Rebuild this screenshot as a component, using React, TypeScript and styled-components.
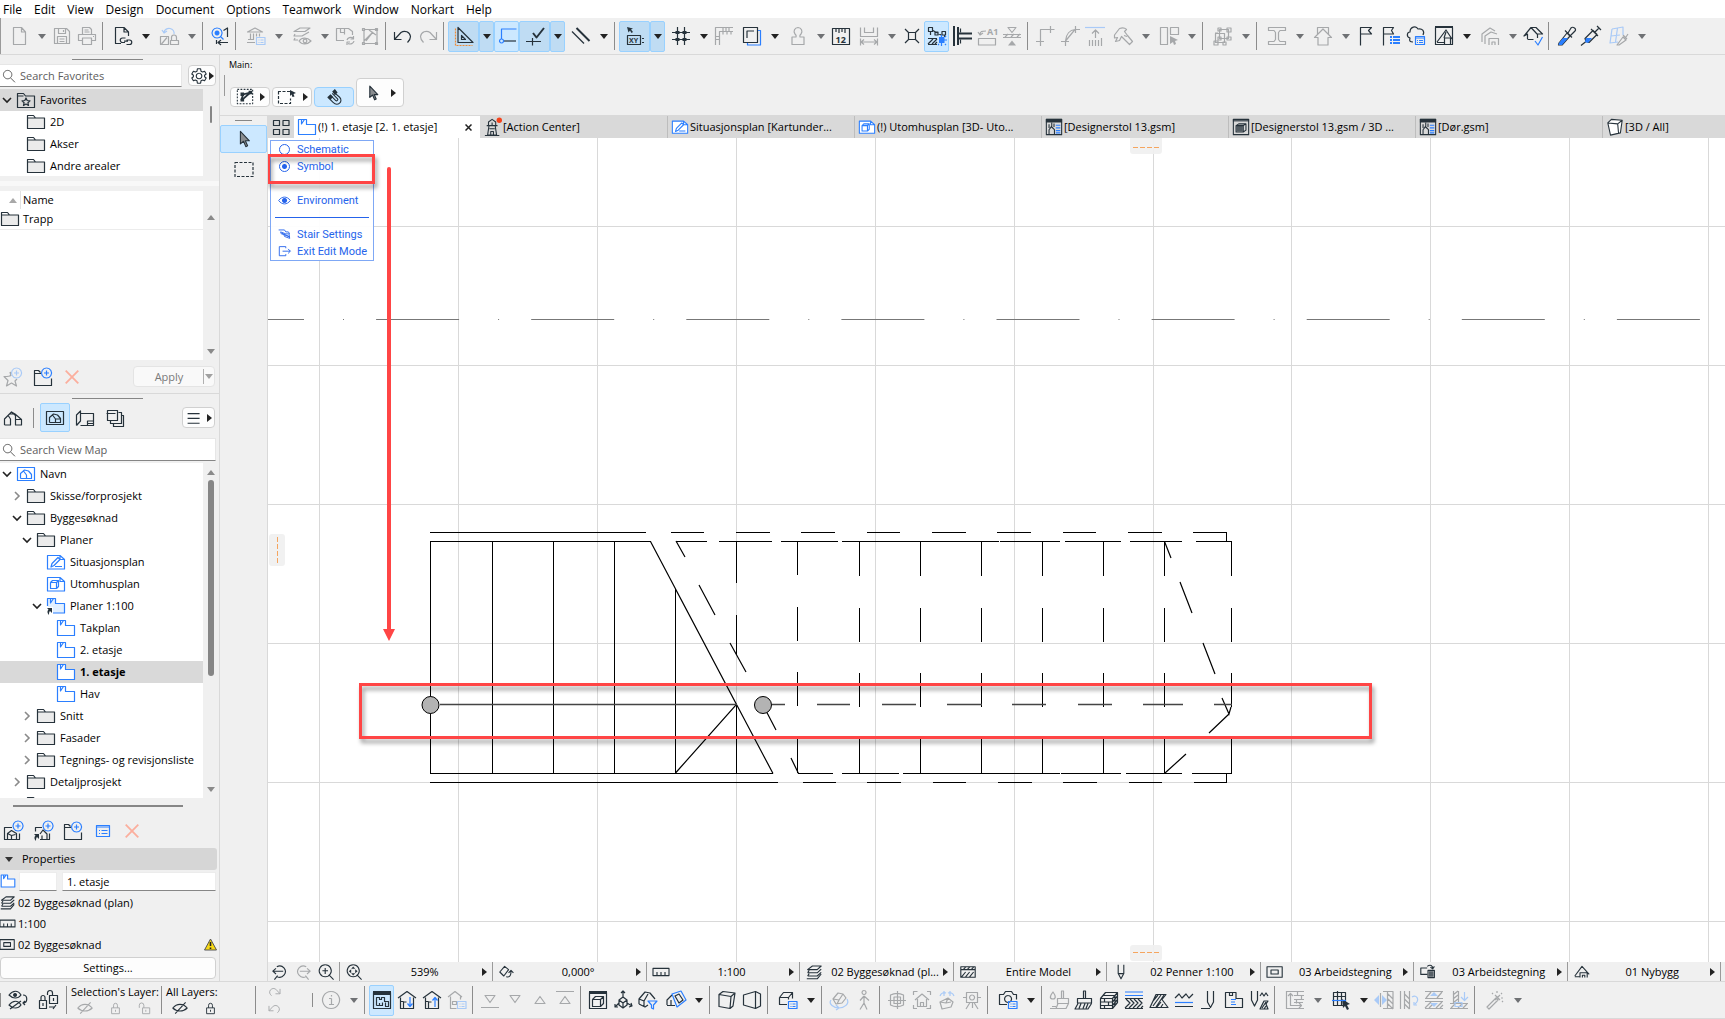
import React from "react";
import styled, { createGlobalStyle, css } from "styled-components";

const INK = "#26323b";
const BLUE = "#2b7fff";
const MENU_BLUE = "#2563eb";
const GREY = "#a6a8aa";
const PALE = "#a9caf7";
const PANEL = "#f0f0f0";
const LINE = "#d9d9d9";
const RED = "#ff4545";

const Global = createGlobalStyle`
  *, *::before, *::after { box-sizing: border-box; }
  html, body { margin: 0; padding: 0; overflow: hidden; }
  body, button, input {
    font-family: "Open Sans", "Noto Sans", sans-serif;
    font-size: 11px;
    line-height: 16px;
    color: #000;
  }
  button { padding: 0; margin: 0; border: 0; background: none; white-space: nowrap; }
  ul { list-style: none; margin: 0; padding: 0; }
`;

/* ---------- icons ---------- */

type Art = { d?: string; f?: string; a?: string; af?: string; o?: string; w?: string; b?: string; t?: [string, number, number, number][] };

const LIST_BADGE = "M10.5 11.5h8.500v7h-8.500z M12.500 14h1 M14.500 14h3 M12.500 16.500h1 M14.500 16.500h3";

const ART: Record<string, Art> = {
  page: { d: "M4.500 1.500h8l4 4.500v12.500h-12z M12.500 1.500v4.500h4" },
  save: { d: "M2.500 2.500h12l3 3v12h-15z M6.500 2.500v5h7v-5 M11.500 4v2 M5.500 17.500v-7h9v7 M7.500 13h5 M7.500 15.500h5" },
  print: { d: "M5.500 8V1.500h7l2 2v4.500 M5 14.500H1.500V8.500h17v6H15 M5.500 12h9v6.500h-9z M7.500 4h4 M7.500 6h5 M16 10.500h1" },
  docLink: { d: "M8 17.500H2.500v-16h8.500l4.500 4.500v4 M11 1.500v4.500h4.500 M12 16.500H9.500a2 2 0 0 1 0-4.500h3 M13.500 18.500h3a2 2 0 0 0 0-4.500h-3 M11 15.200h4" },
  rotatePage: { a: "M5 6a5 4.500 0 0 1 10 2 M3 4l2 3 3-2", d: "M1.500 10.500h8v8h-8z M8 11.500l-5.500 6.500 M11.500 14.500h8v4h-8z M12.500 14v-2.500a2.500 2.500 0 0 1 5 0V14" },
  find: { a: "M7 2a5 5 0 1 0 .1 0 M10.500 10.500l3 3", af: "M7 4.500a2.500 2.500 0 1 0 .1 0", d: "M13.500 4.500l4-2.500v9 M6.500 14v4 M18 16.500H8 M11 14l-3 2.500 3 2.500" },
  bank: { d: "M1.500 6L9 2l7.500 4z M4.500 7.500v6 M7.500 7.500v6 M10.500 7.500v3 M13.500 7.500v3 M2 13.500h6 M1 16.500h8", a: LIST_BADGE },
  layersEye: { d: "M2 5.500l6-3.500h10l-5 3.500z M3 8l-1 2h8l7-4 M3 12l-1 2h4 M7 15c3-4 8-4 12 0c-4 4-9 4-12 0z M13 13.200a1.800 1.800 0 1 0 .1 0" },
  refreshPage: { d: "M9 14.500H1.500v-12h12l4 3V9 M5.500 2.500v4h4 M9.500 2.500v6 M12 14a4 3.500 0 0 1 6-2 M18.500 10v3h-3 M19 15a4 3.500 0 0 1-6 2.500 M12 19v-3h3" },
  hammer: { d: "M4 3.500h13v14H4z M2.500 2.500h2v2h-2z M15.500 2.500h2v2h-2z M2.500 16.500h2v2h-2z M15.500 16.500h2v2h-2z M6 15l7-9 M9 4l7 5 M4 15l9-9" },
  undo: { d: "M1.500 6v7.500h7 M1.500 13.500L8 6.500a6 6 0 0 1 9.500 4c0 3-1 4-3 6" },
  redo: { d: "M18.500 6v7.500h-7 M18.500 13.500L12 6.500a6 6 0 0 0-9.500 4c0 3 1 4 3 6" },
  setSquare: { d: "M4 1.500v15h15z M7.500 9.500v4h4z", o: "M1.500 2.500v17h17" },
  guide: { a: "M4.500 13v-10h15 M4.500 13a2 2 0 1 0 .1 0", d: "M7 15h12" },
  snapTick: { d: "M1 15.500h15 M7.500 12v7.500", b: "M8 7l3.500 4.500L19 2" },
  parallel: { d: "M1 5.500l12 12", b: "M5.500 2l13 13" },
  coords: { f: "M2 1l6 1.500-2 1 2 2.500-1.500 1L5 4.500 3.500 6.500z", d: "M2.500 9.500h13v9h-13z M17 12.500h2 M17 16.500h2", t: [["XY", 4, 17, 7]] },
  grid: { d: "M6.500 1v18 M13.500 1v18 M1 6.500h18 M1 13.500h18", f: "M4.500 5h4v3h-4z M11.500 5h4v3h-4z M4.500 12h4v3h-4z M11.500 12h4v3h-4z" },
  ruler: { d: "M1.500 19V1.500h17.500 M5.500 19V5.500h13.500 M9 2v3 M12 2v3 M15 2v3 M2 10.500h3 M2 13.500h3 M9 5.500v3 M13 5.500v3 M17 5.500v3" },
  square2: { d: "M1.500 1.500h14v15h-14z M5 12V5h7", a: "M16 4.500h2.500v14.500h-13v-2" },
  stamp: { d: "M10 1.500a4 4 0 0 1 3 6.500c-2 2-1 2-1 3h4v7.500H4V11h4c0-1 1-1-1-3a4 4 0 0 1 3-6.500z" },
  ruler12: { d: "M1.500 18.500h17v-16h-17z M5 3v3 M8 3v4 M11 3v3 M14 3v4", t: [["12", 4.5, 17, 9]] },
  dims: { d: "M1.500 1.500v9h17v-9 M5.500 1.500v5h9v-5 M1.500 12.500v7 M18.500 12.500v7 M2 16h16 M5 13.500L2 16l3 2.500 M15 13.500l3 2.500-3 2.500" },
  cross: { d: "M3 3l4 4 M17 3l-4 4 M3 17l4-4 M17 17l-4-4 M6.500 6.500h7v7h-7z" },
  suspend: { d: "M5 4l9 5 M3.500 6v3 M17.500 9v2 M1.500 1.500h4v4h-4z M8 6h3v3H8z M15 5.500h3.500v3.500h-3.500z M1 12.500h9 M1 18.500h9 M1 18l5-5 M5 18l5-5 M8 18l2-2", af: "M12 11h5.500v6H12z", a: "M14.500 9v2 M14.500 17v3 M17 14h3 M11 19l1-1 M18 18l1 1 M19 10l-1 1" },
  beam: { d: "M8.500 2.500v4 M8.500 13.500v4", b: "M2 0v20 M6 1v18 M6 7.500h14 M6 12.500h14" },
  labelA1: { d: "M1.500 12.500h17v6.500h-17z M3 9c0-4 2-4 6-4 M1 6l2 3 3-2", t: [["A1", 10, 9, 9]] },
  stretch: { d: "M1 8.500h18 M1 11.500h18 M6 1.500h8l-4 5z M3 11l3-3 M9 11l3-3 M15 11l3-3", f: "M6 19.500h8l-4-5z" },
  corner: { d: "M5.500 20V3.500h14 M1 15.500h8 M15.500 0v7" },
  arcCorner: { d: "M5.500 20V15 M5.500 15C6 8 10 4 15 3.500 M5.500 15L15 3.500h5 M1 15.500h8 M15.500 0v7" },
  up: { a: "M0 1.500h20", d: "M10.500 12V4 M7 7.500L10.500 4 14 7.500 M4.500 14v6 M7.500 14v6 M10.500 14v6 M13.500 14v6 M16.500 12v8" },
  wrench: { d: "M1.500 9l5-6.500c3-1 5-1 7 1l-2 2 3 4 5 6-3 3-6-6-2-2-2 4-4 1 2-4-3 .5z M11 9.500l3 1" },
  alignSel: { d: "M1.500 1.500h7v17h-7z M11.500 1.500h8v7h-8z", f: "M11 10l8 4-3 1 1 3-2 1-1-3-3 2z" },
  group: { d: "M6.500 3.500h9v9h-9z M2.500 7.500h9v9h-9z M5 2h3v3H5z M14 2h4v4h-4z M14 11h4v3h-4z M5 11h3v3H5z M1 15h4v4H1z M10 16h3v3h-3z M2 7h3" },
  ibeam: { d: "M1.500 1.500h17v3H13l-1.500 2v7l1.500 2h5.500v3h-17v-3H7l1.500-2v-7L7 4.500H1.500z" },
  house: { d: "M1.500 11.500L10 3l8.500 8.500H15v7.500H5v-7.500z M4.500 8V1.500h11v6.500" },
  flag: { d: "M4.500 19.500V1.500h11l-3 3 3 3.500h-11" },
  flagList: { d: "M2.500 19.500V1.500h10l-2 3 2 3.500h-10", af: "M9 10h2v2H9z M12 10h7v2h-7z M9 13h2v2H9z M12 13h7v2h-7z M9 16h2v2H9z M12 16h7v2h-7z" },
  cloudList: { d: "M7 16c-3 0-4-1-3-4c-4-1-3-6 0-6c0-5 6-7 8-3c4-1 7 2 5 6", a: "M9.500 10.500h9v8h-9z M9.500 12h9 M11 14.500h1 M13 14.500h4 M11 16.500h1 M13 16.500h4" },
  houseFrame: { d: "M1.500 1.500h17v17h-17z M3 16l9-12 6 9 M10.500 18v-6h6v6 M3 16.500h7 M12 6l-2 6", f: "M1 0h18v2H1z" },
  houses: { d: "M2 16V8l8-6 5 3 M5 18v-8l6-4 6 2 M9 19v-6.500h9.500V19 M12 19v-3h3v3" },
  houseCheck: { d: "M4.500 13V8L1 10l7-8.500h5l6.500 6.500H14L8 1.500 M4.500 13.500h6 M14.500 8v4", a: "M12 15l3 4 4.500-8" },
  dropper: { d: "M3 17l8-10 3 3-8 9H2.500z M9 4.500l7 7 M12 7l3-5c2-2 6 1 4 3l-5 5", af: "M3 17l4-5h5l-6 7H2.500z" },
  syringe: { d: "M0 19.500l5-4 M5 15.500l-1-3 8-8 4 4-8 8z M14 6l4-4 M16 0l4 4 M10 3l7 7", af: "M5 12h6l-4 5-3-1z" },
  gridDrop: { a: "M3 3l11-2v8 M3 3L1 17l8-1 M8.500 2l-2 14 M2 10l9-1", d: "M8 19l6-8 3 3-7 5z M14 9l4 4 M17 11l2-3" },

  folder: { d: "M1.500 16.500V3.500h6l2 2.500h9v10.500z M1.500 6h8" },
  folderStar: { d: "M1.500 17.500V3.500h6l2 2.500h9v11.500z M1.500 6h6 M10 8l1.200 2.500 2.800.3-2.100 1.900.6 2.800-2.500-1.400-2.500 1.400.6-2.800L6 10.800l2.800-.3z" },
  starPlus: { d: "M7 5l1 4 M5 9.500H1l4 4-1.500 5.500 5-3 5 3-1.500-5 2-2 M4 9.500l3-.5 1-4", a: "M13.500 1a5 5 0 1 0 .1 0 M13.500 3.500v5 M11 6h5" },
  folderPlus: { d: "M8 6.500H1.500V18.500h17v-7 M1.500 6.500V3.500h4l2 2", a: "M13.500 1a5 5 0 1 0 .1 0 M13.500 3.500v5 M11 6h5" },
  viewPlus: { d: "M9 6.500H1.500v12h15v-6 M4.500 18.500v-6l4-3 5 3v6 M8.500 18.500v-4l-4-2 M8.500 14.500l4-1", a: "M15 0a5 5 0 1 0 .1 0 M15 2.500v5 M12.500 5h5" },
  linkViewPlus: { d: "M9 6.500H2.500v4 M7 18.500h9.500v-6 M7 13l3-4 4 4v5 M9 18.500v-4", f: "M1 13h5v5l-2-2c-1 1-1 2-1 4-2-2-2-4-.5-5.500z", a: "M15 0a5 5 0 1 0 .1 0 M15 2.500v5 M12.500 5h5" },
  listBox: { a: "M3.500 4.500h13v11h-13z M3.500 6h13 M6 9.500h1 M8.500 9.500h6 M6 12.500h1 M8.500 12.500h6" },
  remove: { o: "M3 3l14 14 M17 3L3 17" },
  homeOpen: { d: "M1.500 17V11l7-7 4 3.500V17h6V11.500L12 6H7 M1.500 17h6V11l-2-3 M12.500 11.500h6 M8.500 4l3.500 2" },
  homeBox: { d: "M1.500 3.500h17v13h-17z M4.500 14.500v-5l4-3.500 4 1 3 3.500v4h-5v-3.500l-3-4 M4.500 14.500h6 M10.500 11h5" },
  layout: { d: "M1.500 17.500V7l4-4v10l-4 4.500 M5.500 5.500h13v12H5.500 M12.500 17v-4h6 M12.500 15.500h6" },
  books: { d: "M2.500 2.500h10v10h-10z M1.500 5.500h9 M5.500 13v2.500h11v-11h-3 M8.500 16v2.500h10v-11h-2" },
  mapHome: { a: "M1.500 3.500h17v13h-17z M4.500 14.500v-5l4-3.500 4 1 3 3.500v4h-5v-3.500l-3-4 M4.500 14.500h6", w: "M1.500 3.500h17v13h-17z" },
  plan: { a: "M1.500 17.500v-15h8v5h9v10z M4.500 2.500v4.500l3-4.500", w: "M1.500 17.500v-15h8v5h9v10z" },
  planLink: { a: "M1.500 10V2.500h8v5h9v9.500H7 M4.500 2.500v4.500l3-4.500", f: "M1 12h5v5l-2-2c-1 1-1 2-1 4-2-2-2-4-.5-5.500z", },
  drawing: { a: "M1.500 3.500h12.500l4.500 4v9.500h-17z M14 3.500v4h4.500 M5 15l1-3.500 6-6 2 2-6 6z M9 14.500h7", w: "M1.500 3.500h12.500l4.500 4v9.500h-17z" },
  model: { a: "M1.500 3.500h12.500l4.500 4v9.500h-17z M14 3.500v4h4.500 M4.500 8.500h6v6h-6z M4.500 8.500l2-2h6v6l-2 2 M10.500 8.500l2-2", w: "M1.500 3.500h12.500l4.500 4v9.500h-17z" },
  overview: { d: "M2.500 3.500h6v5h-6z M12 3.500h6v5h-6z M2.500 12.500h6v5h-6z M12 12.500h6v5h-6z" },
  lighthouse: { d: "M3 8.500h12 M5 8V4.500l4-3 4 3V8 M5.500 9L4 19h10L12.500 9 M1 19.500h16 M7.500 19v-4h3v4 M6 12h6 M9 5v3" },
  gsm: { d: "M1.500 1.500h17v17h-17z M4.500 18v-5l3-4v-4 M7.500 10l3 3v5 M4.500 7v4 M10 6v4", f: "M1 1h18v4H1z", a: "M12 8h5 M12 11h5 M12 14h5 M12 16.500h5" },
  gsm3d: { d: "M1.500 1.500h17v17h-17z M4.500 8.500h8v7h-8z M4.500 8.500l3-2h8v7l-3 2 M12.500 8.500l3-2", f: "M1 1h18v3H1z M5 9h7v6H5z" },
  box: { d: "M2 5.500l4-4 12 1-2 14-11 2.500z M2 5.500l11 1 5-4 M13 6.500l1 11", w: "M2 5.500l4-4 12 1-2 14-11 2.500z" },
  search: { d: "M8 2a6 6 0 1 0 .1 0 M12.500 13l6 6" },
  gear: { d: "M10 6.500a3.500 3.500 0 1 0 .1 0 M8 1h4l.5 3 2 1 2.500-1 2 3.500-2 1.500v2l2 1.500-2 3.500-2.500-1-2 1-.5 3H8l-.5-3-2-1L3 16l-2-3.500 2-1.500V9L1 7.500 3 4l2.500 1 2-1z" },
  hamburger: { d: "M2 4.500h15 M2 10.500h15 M2 16.500h15" },
  arrow: { d: "M6 1.500v14l3.500-3 2.500 6 2-1-2.500-5.500H16z" },
  marquee: {},
  marqueeArrow: { f: "M13 3l6 3-2.500 1 1 2.500-2 .5-1-2.500L13 9z" },
  magnet: { d: "M3 10l6 6c5 5 12-1 7-6L9 4 M6 8l6 6c1 1 3-1 2-2L8 6", f: "M3 10l3-3 3 3-3 3z M8 4l3-3 3 4-3 3z" },
  selFrame: { b: "M6 13l2-6 8-2 M7 13l9-8", f: "M5 5h4v4H5z M14 3h4v4h-4z M5 12h4v3H5z" },

  eyeToggle: { d: "M1 5c4-5 9-5 12 0c-3 4-8 4-12 0z M1 15c4-5 9-5 12 0c-3 4-8 4-12 0z M2 19L13 11 M15 5c5 0 5 8 0 8 M17 11l-2 2 2 2", f: "M7 3a2 2 0 1 0 .1 0z" },
  locks: { d: "M1.500 10.500h7v8h-7z M3 10V7.500a2 2 0 0 1 4 0V10 M5 13v3 M11.500 5.500h8v8h-8z M9.500 5V3a2.500 2.500 0 0 1 5 0v2 M15.500 8v3 M11 17h6 M15 19l3-4" },
  eyeOff: { d: "M1 10c5-6 13-6 18 0c-5 5-13 5-18 0z M4 17L17 3" },
  lock: { d: "M4 9h12v9H4z M7 9V5a3 3 0 0 1 6 0v4 M10 12v3" },
  unlock: { d: "M7 9h11v9H7z M2 9V5a3 3 0 0 1 7 0v4 M12 12v3" },
  info: { d: "M10 1.500a8.500 8.500 0 1 0 .1 0 M10.500 8.500v6 M8 8.500h2.500 M8 14.500h5 M10.500 5v1.500" },
  floorPlan: { d: "M1.500 2.500h17v16h-17z M4.500 15.500V7.500h3v2h2v-2h3v4h4v5h-3v-4 M4.500 15.500h6v-3 M7.500 15v-2", f: "M1 1h18v4H1z" },
  homeDown: { d: "M1 8l9-6.500L19 8 M3.500 7.500v11h13v-11 M6.500 18v-6h3 M3.500 11.500h3", a: "M13 7v9 M10.500 13.500l2.500 3 2.500-3" },
  homeUp: { d: "M1 8l9-6.500L19 8 M3.500 7.500v11h13v-11 M6.500 18v-6h3 M3.500 11.500h3", a: "M13 17V8 M10.500 10.500l2.500-3 2.500 3" },
  homeList: { d: "M1 7l7-5.500L15 7 M3.500 6.500v12h6 M13.500 6.500v3 M5.500 11.500h4v3h-4z", a: LIST_BADGE },
  downEnd: { d: "M5 5.500h10l-5 7z M1 17.500h18" },
  down: { d: "M5 5.500h10l-5 7z" },
  upTri: { d: "M5 13.500h10l-5-7z" },
  upEnd: { d: "M5 13.500h10l-5-7z M1 1.500h18" },
  view3d: { d: "M1.500 2.500h17v16h-17z M4.500 9.500h8v7h-8z M4.500 9.500l3-3h8v7l-3 3 M12.500 9.500l3-3", f: "M1 1h18v3H1z" },
  orbit: { d: "M10 8V1 M8 3l2-2 2 2 M6 13l-4 4 M2 14v3h3 M14 13l5 3 M16 17l3-1-1-3 M10 7l4 3v5l-4 3-4-3v-5z M6 10l4 3 4-3 M10 13v5" },
  homeFilter: { d: "M1 14V9l6-7 5 1 5 6 M1 14l6 3 3-2 M6 11l4-7 M1 9l5 2v5", a: "M10 11h9l-3.500 4v4l-2-1v-3z" },
  cutPlane: { a: "M6 4l9-3 5 9-9 7z M6 4l5 13", d: "M1 15v-5l5-5 M1 15.500h8 M9 6l4-2 4 6-4 3z M5 10v5" },
  axo: { d: "M2 4.500l4-3 12 1.500-2 13-3 2.500L2 16.500z M2 4.500l12 2 4-3.500 M14 6.500l-1 12" },
  persp: { d: "M1.500 5l12-3.500v17L1.500 15z M13.500 1.500L18.500 4v12l-5 2.500" },
  cubeList: { d: "M9 14.500H1.500V7.500h9v2 M1.500 7.500l4-5h9v6 M10.500 7.500l4-5", a: LIST_BADGE },
  turntable: { d: "M4 9l5-6 5 1 3 4-4 5-6 1z M4 9l6 1 4-6 M10 10l-2 4", a: "M2 10c-3 4 3 8 8 8s11-4 8-9 M7 15l3 3-3 2" },
  walk: { d: "M10 .5a2 2 0 1 0 .1 0 M10 6v7l3 6.500 M10 13l-4 6.500 M10 6l-4 4.500 M10 6l5 4.500" },
  globe: { d: "M3.500 5c4-2 9-2 13 0v10c-4 2-9 2-13 0z M10.500 1v18 M1 10.500h18 M7 7h6.500v6.500H7z" },
  homeTarget: { d: "M1.500 5V1.500h4 M15 1.500h3.500V5 M18.500 15v3.500h-4 M5 18.500H1.500V15 M3 10l7-6 7 6 M5.500 9v7.500h9V9 M8.500 16.500v-4h3v4" },
  lookCube: { a: "M3 6c1-3 4-4 6-3 M7 1v5 M17 6c-1-3-4-4-6-3 M13 1v5", d: "M3 12l8-4 5 4-2 5-9 2z M3 12l6 1 2-5 M9 13l5-1" },
  camera: { d: "M4.500 2.500h11v10h-11z M10 5a2.500 2.500 0 1 0 .1 0 M1 7.500h3.500 M15.500 7.500h3.500 M10.500 12.500V18 M8 12.500L4 19 M12 12.500l4 6.500" },
  photoList: { d: "M9 14.500H1.500V4.500h4l2-3h6l2 3h3v5 M10 5.500a3.500 3.500 0 1 0 .1 0", a: LIST_BADGE },
  brushDrop: { d: "M4 2c-4 5-3 7 0 7s3-3 0-7z M12.500 8V1h2v7 M8.500 8.500h11v5h-11z M9 13.500l-2 5h10l2.500-5 M1 18.500h6 M3 16.500h4" },
  brush: { d: "M9.500 8V1h2v7 M3.500 8.500h14v4.500h-14z M4 13.500l-3 5.500h13l3.500-5.500 M7 13.500l-2 5 M11 13.500l-2 5 M14 13.500l-2 5" },
  bricks: { d: "M1.500 8.500h12v10h-12z M1.500 8.500l5-6h12v10l-5 6 M13.500 8.500l5-6 M1.500 12h12l5-6 M1.500 15.500h12l5-6 M5.500 8.500v3.500 M9.500 12V15.500 M5.500 15.500v3 M16 6v9 M4 5.500h12" },
  strata: { a: "M1 2h18 M1 5.500h18", d: "M1 8.500h18 M1 18.500h18 M1 18l5-5-4-4 M5 18l5-5-4-4 M9 18l5-5-4-4 M13 18l5-5-4-4 M17 18l2-2" },
  hatch: { d: "M1 17.500L7 4.500h10l-4 5 6 8z M4 16l8-11 M8 17l4-5 M12 17l2-3 M4 11l5-6 M15 5l-8 12" },
  zigzag: { d: "M1 8l4-4 3 4 4-4 3 4 4-4 M1 16.500h18", a: "M1 12.500h18" },
  pen: { d: "M8.500 1v11l3 5.500 3-5.500V1 M2 18.500h9", },
  planBlue: { d: "M1.500 17.500v-15h10.500v6h6.500v9z M5.500 2.500v3h3v-3", a: "M7 9.500h5 M7 12h4 M7 14.500h5" },
  penMulti: { d: "M2.500 1v9l3 6 3-6V1 M11 6l2-3 2 3 2-3 2 3 M11 19l4-8h4l-2 3 2 5z M13 18l4-6 M15 19l2-3" },
  wallGrid: { d: "M1 1.500h18 M1 18.500h18 M1.500 1v18 M5.500 3.500v12h11 M3 6l2.500-2.500L8 6 M14 13l2.500 2.500L14 18 M9 5.500h10 M9 9.500h10 M12.500 2v3.500 M16.500 5.500v4 M11.500 9.500v4 M9 12.500h9" },
  gridCursor: { d: "M2.500 2.500h12v13h-12z M6.500 1v15 M10.500 2v13 M2 6.500h12", a: "M1 10.500h14", f: "M11 9l8 5-3 1 2 4-2 1-2-4-2 2z" },
  flipWall: { af: "M5 5v10l-5-5z M8 5v10l5-5z", d: "M6.500 3v14 M9 1.500h10v17H9 M13 3l6 6 M13 8l6 6 M13 13l6 6 M13.500 2v16" },
  turnWall: { d: "M1.500 1v18 M5.500 1v18 M10.500 1v18 M5.500 4l5 5 M5.500 9l5 5 M5.500 14l5 5", a: "M13 7c5-3 8 3 3 7 M18 15h-3v-3" },
  splitSlab: { d: "M1 1.500h18 M1 8.500h18 M1 11.500h18 M1 18.500h18 M1 18l6-6 M5 18l4-4 M12 18l6-6 M16 18l3-3 M2 8l5-6 M13 8l5-6", af: "M6 6h8l-4-4z M6 13h8l-4 4z" },
  trimSlab: { d: "M4.500 1v12 M9.500 1v12 M1 13.500h18 M1 18.500h18 M4 5l5-4 M4 9l5-4 M4 13l5-4 M2 18l4-4 M9 18l4-4 M14 18l4-4", a: "M15.500 2v8 M12 7l3.500 3.500L19 7 M6 12.500h7v4H6z" },
  wand: { d: "M2 17l9-9 2 2-9 9z M10 5l5 5 M15 5l-5 5 M12 1v2 M18 8h-2 M17 3l-1 1 M7 3l1 1 M18 12l-1-1" },

  zoomBack: { d: "M6 3.500a7 7 0 1 1 0 12 M1 9h13 M5 5.500L1 9l4 3.500 M7 14.500l-4 5" },
  zoomFwd: { d: "M14 3.500a7 7 0 1 0 0 12 M6 9h13 M15 5.500L19 9l-4 3.500 M13 14.500l4 5" },
  zoomIn: { d: "M9 1a7.500 7.500 0 1 0 .1 0 M14 14l5.500 5.500 M9 5v7.500 M5.500 8.500h7" },
  zoomFit: { d: "M9 1a7.500 7.500 0 1 0 .1 0 M14 14l5.500 5.500", f: "M9 3l2.500 3h-5z M9 14.500l2.500-3h-5z M3.500 9l3-2.500v5z M14.500 9l-3-2.500v5z" },
  orient: { d: "M1 10l6-7 5 4-6 8z M9 16c5 1 6-2 6-7 M12 11l3-3 3 3" },
  scale: { d: "M0 5.500h20v9H0z M5 14v-4 M10 14v-4 M15 14v-4" },
  layers: { d: "M2 7l6-4.500h11L14 7z M2 11h12l5-4.500 M2 15h12l5-4.500 M4 8l-2 3 M4 12l-2 3 M1 18.500h13l5-6" },
  hatchBox: { d: "M1 3.500h18v13H1z M1 7h18 M2 16l5-6 M7 16l5-6 M12 16l5-6 M4 7l3-3 M9 7l3-3 M14 7l3-3" },
  penSmall: { d: "M6.500 1v11l3.500 6.500 3.500-6.500V1 M6.500 12h7" },
  frame: { d: "M0 3.500h19v13H0z M5 7.500h9v5H5z" },
  swap: { d: "M9 5H1v8h8 M10 8h8v9h-8z M9 3c4-3 7-1 7 3 M13 4l3 2 2-3", f: "M11 9h6v7h-6z" },
  homeSmall: { d: "M1 15l9-12 9 10 M7.500 17v-6h9v6 M10.500 17v-3h3v3 M1 16h6" },
  eye: { d: "M1 10c5-7 13-7 18 0c-5 7-13 7-18 0z", f: "M10 6a4 4 0 1 0 .1 0z" },
  stair: { d: "M1 3h9l2 3h4l2 3 M4 6l8 3h5l1 7-8-3-1-3-4-1-1-3 M6 8l11 5 M9 10l9 4" },
  exit: { d: "M12 5V2.500H2v14h10V14 M7 9.500h12 M15.500 6l3.500 3.500-3.500 3.500" },
};

const Svg = styled.svg<{ $size: number }>`
  display: block;
  flex: none;
  width: ${(p) => p.$size}px;
  height: ${(p) => p.$size}px;
  overflow: visible;
  fill: none;
  stroke-linejoin: round;
`;

type IconProps = { name: string; size?: number; dim?: boolean; tint?: string };

function Icon({ name, size = 20, dim, tint }: IconProps) {
  const art = ART[name];
  const main = tint ?? (dim ? GREY : INK);
  const accent = dim ? PALE : tint ?? BLUE;
  const warm = name === "remove" ? "#fbae9d" : "#f08a35";
  return (
    <Svg $size={size} viewBox="0 0 20 20" aria-hidden="true" strokeWidth={name === "remove" ? 2 : size < 18 ? 1.4 : 1.2}>
      {art.w && <path d={art.w} fill="#fff" />}
      {name === "folder" && <path d="M1.500 6h17v10.500h-17z" fill="#ebebeb" />}
      {name === "planLink" && <path d="M1.500 3h8v5h9v9H7v-6H2z" fill="#e3f0ff" />}
      {name === "arrow" && <path d={art.d} fill="#8a8d90" />}
      {name === "marquee" && <path d="M1 3.500h18v14H1z" stroke={main} strokeDasharray="3 1.500" />}
      {name === "marqueeArrow" && <path d="M1 4.500h12 M1.500 4.500v12h12v-5" stroke={main} strokeDasharray="3 1.500" />}
      {name === "selFrame" && <path d="M1.500 1.500h17v16h-17z" stroke={main} strokeDasharray="2 1.500" />}
      {art.d && <path d={art.d} stroke={main} />}
      {art.b && <path d={art.b} stroke={main} strokeWidth="2" />}
      {art.f && <path d={art.f} fill={main} opacity={name === "gsm3d" || name === "swap" ? 0.75 : 1} />}
      {art.a && <path d={art.a} stroke={accent} />}
      {art.af && <path d={art.af} fill={accent} />}
      {art.o && <path d={art.o} stroke={warm} strokeDasharray={name === "remove" ? undefined : "2 1"} />}
      {art.t?.map(([s, x, y, fs]) => (
        <text key={s} x={x} y={y} fontSize={fs} fontWeight={700} fill={main}>{s}</text>
      ))}
      {name === "lighthouse" && <circle cx="17" cy="2.500" r="3" fill="#f4431c" />}
    </Svg>
  );
}

/* ---------- shared controls ---------- */

const Caret = styled.span<{ $dir?: "down" | "right" | "up"; $color?: string }>`
  flex: none;
  width: 0;
  height: 0;
  border: 4px solid transparent;
  ${(p) => {
    const c = p.$color ?? "#222";
    if (p.$dir === "right") return css`border-left: 5px solid ${c}; border-right: 0;`;
    if (p.$dir === "up") return css`border-bottom: 5px solid ${c}; border-top: 0;`;
    return css`border-top: 5px solid ${c}; border-bottom: 0;`;
  }}
`;

const ToolButton = styled.button<{ $w: number; $on?: "deep" | "soft" }>`
  flex: none;
  width: ${(p) => p.$w}px;
  height: 31px;
  display: flex;
  align-items: center;
  justify-content: center;
  ${(p) => p.$on && css`
    background: ${p.$on === "deep" ? "#bfdcf3" : "#cce8ff"};
    border: 1px solid #99d1ff;
    border-radius: 2px;
  `}
`;

const Divider = styled.span`
  flex: none;
  width: 8px;
  height: 28px;
  background: linear-gradient(#8c8c8c, #8c8c8c) 3px 0 / 1px 100% no-repeat;
`;

/* a tool is "name", "name>" with a drop-down arrow; "~" dims it, "+" and "*" mark it as pressed */
function Tools({ list }: { list: string }) {
  return (
    <>
      {list.split(" ").map((raw, i) => {
        if (raw === "|") return <Divider key={i} />;
        const dim = raw.startsWith("~");
        const on = raw.startsWith("*") ? "deep" : raw.startsWith("+") ? "soft" : undefined;
        const drop = raw.endsWith(">");
        const name = raw.replace(/[~*+>]/g, "");
        return (
          <React.Fragment key={i}>
            <ToolButton $w={drop ? 31 : 25} $on={on} aria-label={name}><Icon name={name} dim={dim} /></ToolButton>
            {drop && (
              <ToolButton $w={15} $on={on} aria-label={`${name} options`}>
                <Caret $color={dim ? "#6f7174" : "#222"} />
              </ToolButton>
            )}
          </React.Fragment>
        );
      })}
    </>
  );
}

const Grip = styled.div<{ $h: number; $line: number; $span?: number; $thick?: number }>`
  flex: none;
  width: ${(p) => (p.$span ? p.$span + "px" : "auto")};
  height: ${(p) => p.$h}px;
  display: flex;
  align-items: center;
  justify-content: center;
  &::after {
    content: "";
    width: ${(p) => p.$line}px;
    height: ${(p) => p.$thick ?? 1}px;
    background: #868686;
  }
`;

const SmallButton = styled.button<{ $w: number; $h: number; $on?: boolean; $gap?: number }>`
  flex: none;
  width: ${(p) => p.$w}px;
  height: ${(p) => p.$h}px;
  display: flex;
  align-items: center;
  justify-content: center;
  gap: ${(p) => p.$gap ?? 6}px;
  background: ${(p) => (p.$on ? "#cce8ff" : "#fdfdfd")};
  border: 1px solid ${(p) => (p.$on ? "#99d1ff" : "#d0d0d0")};
  border-radius: 4px;
`;

/* ---------- frame ---------- */

const Shell = styled.div`
  display: flex;
  flex-direction: column;
  height: 100vh;
  background: ${PANEL};
`;

const MenuBar = styled.nav`
  flex: none;
  display: flex;
  gap: 12px;
  height: 18px;
  padding-left: 3px;
  background: #fff;
  button { font-size: 12px; line-height: 18px; padding-top: 1px; }
`;

const TopBar = styled.header`
  flex: none;
  display: flex;
  align-items: center;
  height: 37px;
  padding-left: 3px;
  overflow: hidden;
  border-bottom: 1px solid ${LINE};
  box-shadow: inset 1px 0 #9a9a9a;
`;

const Body = styled.div`
  flex: 1;
  min-height: 0;
  display: flex;
`;

/* ---------- left palettes ---------- */

const Left = styled.aside`
  flex: none;
  width: 220px;
  display: flex;
  flex-direction: column;
  border-right: 1px solid ${LINE};
`;

const SearchRow = styled.div`
  flex: none;
  display: flex;
  align-items: center;
  justify-content: space-between;
  padding-right: 3px;
  margin-bottom: 2px;
`;

const SearchBox = styled.label<{ $w: number }>`
  display: flex;
  align-items: center;
  gap: 4px;
  width: ${(p) => p.$w}px;
  height: 23px;
  padding-left: 2px;
  background: #fff;
  border: 1px solid #e6e6e6;
  border-bottom-color: #868686;
  border-left: 0;
  input { flex: 1; min-width: 0; border: 0; padding: 0; outline: 0; background: none; }
  input::placeholder { color: #5d5d5d; opacity: 1; }
`;

const Scroller = styled.div<{ $h?: number }>`
  flex: ${(p) => (p.$h ? "none" : "1")};
  min-height: 0;
  height: ${(p) => (p.$h ? p.$h + "px" : "auto")};
  display: flex;
`;

const List = styled.ul`
  width: 203px;
  background: #fff;
  overflow: hidden;
`;

const Track = styled.div<{ $top: number }>`
  flex: 1;
  display: flex;
  flex-direction: column;
  align-items: center;
  padding: ${(p) => p.$top}px 0 6px;
`;

const Thumb = styled.div<{ $w: number; $h: number }>`
  width: ${(p) => p.$w}px;
  height: ${(p) => p.$h}px;
  margin-top: 5px;
  border-radius: 3px;
  background: #868686;
`;

const Spacer = styled.div`
  flex: 1;
`;

const Row = styled.li<{ $level: number; $on?: boolean; $bold?: boolean }>`
  display: flex;
  align-items: center;
  gap: 4px;
  height: 22px;
  padding-left: ${(p) => p.$level * 10 + 2}px;
  white-space: nowrap;
  font-weight: ${(p) => (p.$bold ? 700 : 400)};
  background: ${(p) => (p.$on ? "#d9d9d9" : "transparent")};
`;

const ChevronBox = styled.svg`
  flex: none;
  width: 10px;
  height: 10px;
  fill: none;
  stroke-width: 1.6;
`;

function Chevron({ open }: { open?: boolean }) {
  return (
    <ChevronBox viewBox="0 0 10 10" stroke={open === undefined ? "none" : open ? "#222" : "#8a8a8a"}>
      <path d={open ? "M1 3l4 4 4-4" : "M3 1l4 4-4 4"} />
    </ChevronBox>
  );
}

const Split = styled.div`
  flex: none;
  height: 15px;
  border: solid ${PANEL};
  border-width: 5px 0;
  background: #f8f8f8;
`;

const NameHead = styled.li`
  display: flex;
  align-items: center;
  height: 18px;
  padding-left: 9px;
  gap: 3px;
  span:last-child { flex: 1; border-left: 1px solid #e2e2e2; padding-left: 2px; height: 18px; line-height: 18px; }
`;

const NameRow = styled.li`
  display: flex;
  align-items: center;
  gap: 3px;
  height: 21px;
  border-bottom: 1px solid #ececec;
`;

const Actions = styled.div<{ $h: number; $line?: boolean }>`
  flex: none;
  display: flex;
  align-items: center;
  gap: 10px;
  height: ${(p) => p.$h}px;
  padding: 0 4px 0 3px;
  border-bottom: ${(p) => (p.$line ? 1 : 0)}px solid ${LINE};
`;

const Apply = styled.button`
  width: 82px;
  height: 21px;
  display: grid;
  grid-template-columns: 1fr 10px;
  align-items: center;
  justify-items: center;
  margin-left: auto;
  border: 1px solid #e4e4e4;
  border-radius: 4px;
  background: linear-gradient(#b0b0b0, #b0b0b0) 69px 2px / 1px 15px no-repeat #f9f9f9;
  color: #7a7a7a;
`;

const MapTabs = styled.div`
  flex: none;
  display: flex;
  align-items: center;
  height: 29px;
  margin-bottom: 6px;
  padding: 0 4px 0 1px;
  button:last-child { margin-left: auto; }
`;

const TabButton = styled.button<{ $on?: boolean }>`
  width: 30px;
  height: 29px;
  display: grid;
  place-items: center;
  border-radius: 2px;
  border: 1px solid ${(p) => (p.$on ? "#99d1ff" : "transparent")};
  background: ${(p) => (p.$on ? "#cce8ff" : "none")};
`;

const FirstTab = styled(TabButton)`
  width: 24px;
  margin-right: 5px;
`;

const TabDivider = styled(Divider)`
  width: 10px;
  height: 20px;
`;

const PropsHead = styled.button`
  flex: none;
  display: flex;
  align-items: center;
  gap: 9px;
  width: 217px;
  height: 22px;
  padding-left: 5px;
  background: #d6d6d6;
  border-radius: 0 3px 3px 0;
`;

const PropRow = styled.div<{ $h: number }>`
  flex: none;
  display: flex;
  align-items: center;
  gap: 3px;
  height: ${(p) => p.$h}px;
  padding-right: 2px;
  svg:last-child:not(:first-child) { margin-left: auto; }
`;

const Field = styled.input<{ $w: number }>`
  flex: none;
  width: ${(p) => p.$w}px;
  height: 19px;
  margin-right: 2px;
  padding: 0 4px;
  border: 1px solid #ececec;
  border-bottom-color: #868686;
  background: #fff;
`;

const Settings = styled(SmallButton)`
  margin: 2px 0;
`;

/* ---------- work area ---------- */

const Work = styled.main`
  flex: 1;
  min-width: 0;
  display: flex;
  flex-direction: column;
`;

const InfoBox = styled.section`
  flex: none;
  height: 61px;
  padding: 2px 4px 0;
  border-bottom: 1px solid ${LINE};
  h2 { margin: 0 0 0 5px; font-size: 9px; font-weight: 400; line-height: 15px; }
`;

const InfoTools = styled.div`
  display: flex;
  align-items: flex-end;
  gap: 2px;
  height: 35px;
  padding-left: 6px;
  background: linear-gradient(#9a9a9a, #9a9a9a) 0 3px / 1px 21px no-repeat;
`;

const WorkRow = styled.div`
  flex: 1;
  min-height: 0;
  display: flex;
`;

const Toolbox = styled.div`
  flex: none;
  width: 48px;
  display: flex;
  flex-direction: column;
  border-right: 1px solid ${LINE};
`;

const BigTool = styled.button<{ $on?: boolean }>`
  height: 28px;
  margin-bottom: 2px;
  display: grid;
  place-items: center;
  border: 1px solid ${(p) => (p.$on ? "#99d1ff" : "transparent")};
  border-radius: 2px;
  background: ${(p) => (p.$on ? "#cce8ff" : "none")};
`;

const Pane = styled.div`
  flex: 1;
  min-width: 0;
  display: flex;
  flex-direction: column;
`;

const TabStrip = styled.div`
  flex: none;
  display: flex;
  height: 22px;
  overflow: hidden;
  background: #d9d9d9;
`;

const Overview = styled.button`
  flex: none;
  width: 26px;
  display: grid;
  place-items: center;
`;

const Tab = styled.button<{ $on?: boolean }>`
  flex: none;
  width: 187px;
  display: flex;
  align-items: center;
  gap: 1px;
  padding: 0 8px 0 3px;
  background: ${(p) => (p.$on ? "#fff" : "#d9d9d9")};
  border-right: 1px solid ${(p) => (p.$on ? "#d9d9d9" : "#bdbdbd")};
`;

const CloseMark = styled.svg`
  width: 7px;
  height: 7px;
  margin-left: auto;
  stroke: #222;
  stroke-width: 1.5;
`;

const Canvas = styled.div`
  flex: 1;
  min-height: 0;
  position: relative;
  overflow: hidden;
  background: #fff;
`;

const Drawing = styled.svg`
  position: absolute;
  left: 0;
  top: 0;
  width: 1457px;
  height: 824px;
  fill: none;
  stroke: #000;
`;

const Popup = styled.fieldset`
  position: absolute;
  left: 2px;
  top: 2px;
  width: 104px;
  margin: 0;
  padding: 0 4px;
  border: 1px solid #7fa8f5;
  background: rgba(255, 255, 255, 0.95);
  min-width: 0;
`;

const PopRow = styled.label`
  display: flex;
  align-items: center;
  gap: 6px;
  height: 17px;
  padding-left: 3px;
  white-space: nowrap;
  font-family: Roboto, "Open Sans", sans-serif;
  color: ${MENU_BLUE};
  button { font-family: inherit; color: inherit; line-height: 17px; }
`;

const Radio = styled.input`
  appearance: none;
  flex: none;
  width: 11px;
  height: 11px;
  margin: 0 1px;
  border: 1px solid ${MENU_BLUE};
  border-radius: 50%;
  background: #fff;
  &:checked { background: radial-gradient(circle, ${MENU_BLUE} 0 2px, #fff 3px); }
`;

const PopRule = styled.div`
  height: 17px;
  background: linear-gradient(${MENU_BLUE}, ${MENU_BLUE}) 0 8px / 100% 1px no-repeat;
`;

const Callout = styled.div<{ $x: number; $y: number; $w: number; $h: number }>`
  position: absolute;
  left: ${(p) => p.$x}px;
  top: ${(p) => p.$y}px;
  width: ${(p) => p.$w}px;
  height: ${(p) => p.$h}px;
  border: 3px solid ${RED};
  filter: drop-shadow(2px 4px 2px rgba(0, 0, 0, 0.4));
`;

const StatusBar = styled.div`
  flex: none;
  display: flex;
  align-items: center;
  height: 19px;
  padding-right: 4px;
`;

const ZoomButton = styled.button`
  width: 23px;
  display: grid;
  place-items: center;
`;

const Segment = styled.button`
  flex: 1 1 0;
  min-width: 0;
  height: 19px;
  display: grid;
  grid-template-columns: 21px minmax(0, 1fr) 10px;
  align-items: center;
  padding-left: 6px;
  border-left: 1px solid #9a9a9a;
  &:last-child { border-right: 1px solid #9a9a9a; }
  > span:nth-child(2) { text-align: center; }
`;

const ZoomGroup = styled.div`
  display: flex;
  padding: 0 2px 0 0;
`;

/* ---------- bottom bar ---------- */

const BottomBar = styled.footer`
  flex: none;
  display: flex;
  align-items: center;
  height: 38px;
  overflow: hidden;
  border: solid ${LINE};
  border-width: 1px 0;
`;

const LayerGroup = styled.div<{ $w: number }>`
  flex: none;
  width: ${(p) => p.$w}px;
  height: 36px;
  padding-top: 2px;
  white-space: nowrap;
  div { display: flex; align-items: center; gap: 16px; padding-left: 6px; }
`;

const UndoStack = styled.div`
  flex: none;
  width: 52px;
  display: flex;
  flex-direction: column;
  gap: 4px;
  padding-left: 8px;
`;

const TwoButton = styled.button`
  flex: none;
  width: 30px;
  display: grid;
  place-items: center;
`;

const Short = styled.span`
  flex: none;
  width: 3px;
  height: 14px;
  border-left: 1px solid #8c8c8c;
`;

/* ---------- data ---------- */

const MENUS = ["File", "Edit", "View", "Design", "Document", "Options", "Teamwork", "Window", "Norkart", "Help"];

const TOP_TOOLS =
  "~page> ~save ~print | docLink> ~rotatePage> | find | ~bank> ~layersEye> ~refreshPage ~hammer | undo ~redo | *setSquare> +guide *snapTick> parallel> | *coords> grid> ~ruler square2> ~stamp> ruler12 ~dims> cross +suspend beam ~labelA1 ~stretch | ~corner ~arcCorner ~up ~wrench> ~alignSel> | ~group> | ~ibeam> ~house> flag flagList cloudList houseFrame> ~houses> houseCheck | dropper syringe ~gridDrop>";

const BOTTOM_TOOLS =
  "+floorPlan homeDown homeUp ~homeList | ~downEnd ~down ~upTri ~upEnd | view3d orbit homeFilter cutPlane> | axo persp | cubeList> | ~turntable ~walk | ~globe ~homeTarget ~lookCube ~camera | photoList> | ~brushDrop brush bricks strata hatch zigzag pen planBlue penMulti | ~wallGrid> gridCursor> ~flipWall ~turnWall ~splitSlab ~trimSlab | ~wand>";

const TREE: [string, number, string, boolean?][] = [
  ["Navn", 0, "mapHome", true],
  ["Skisse/forprosjekt", 1, "folder", false],
  ["Byggesøknad", 1, "folder", true],
  ["Planer", 2, "folder", true],
  ["Situasjonsplan", 3, "drawing"],
  ["Utomhusplan", 3, "model"],
  ["Planer 1:100", 3, "planLink", true],
  ["Takplan", 4, "plan"],
  ["2. etasje", 4, "plan"],
  ["1. etasje", 4, "plan"],
  ["Hav", 4, "plan"],
  ["Snitt", 2, "folder", false],
  ["Fasader", 2, "folder", false],
  ["Tegnings- og revisjonsliste", 2, "folder", false],
  ["Detaljprosjekt", 1, "folder", false],
  ["", 1, "folder"],
];

const TABS: [string, string][] = [
  ["plan", "(!) 1. etasje [2. 1. etasje]"],
  ["lighthouse", "[Action Center]"],
  ["drawing", "Situasjonsplan [Kartunder..."],
  ["model", "(!) Utomhusplan [3D- Uto..."],
  ["gsm", "[Designerstol 13.gsm]"],
  ["gsm3d", "[Designerstol 13.gsm / 3D ..."],
  ["gsm", "[Dør.gsm]"],
  ["box", "[3D / All]"],
];

const SEGMENTS: [string, string][] = [
  ["zoomFit", "539%"],
  ["orient", "0,000°"],
  ["scale", "1:100"],
  ["layers", "02 Byggesøknad (pl..."],
  ["hatchBox", "Entire Model"],
  ["penSmall", "02 Penner 1:100"],
  ["frame", "03 Arbeidstegning"],
  ["swap", "03 Arbeidstegning"],
  ["homeSmall", "01 Nybygg"],
];

const GRID_X = [319, 458, 597, 736, 875, 1014, 1153, 1291, 1430, 1569, 1708];
const GRID_Y = [226, 365, 504, 643, 782, 921];

const h = (y: number, ...spans: [number, number][]) => spans.map(([a, b]) => `M${a} ${y}.5H${b}`).join("");
const v = (x: number, ...spans: [number, number][]) => spans.map(([a, b]) => `M${x}.5 ${a}V${b}`).join("");

const TREADS: [number, number][] = [[541, 576], [608, 642], [673, 707], [738, 773]];

const STRAIGHT = [
  h(532, [430, 646], [671, 704], [736, 770], [801, 835], [867, 900], [932, 966], [997, 1031], [1063, 1096], [1128, 1162], [1193, 1227]),
  h(541, [430, 651], [676, 707], [719, 772], [781, 838], [842, 999], [1000, 1060], [1065, 1121], [1130, 1182], [1196, 1232]),
  h(773, [430, 773], [798, 833], [842, 899], [903, 1060], [1061, 1121], [1126, 1182], [1192, 1232]),
  h(782, [430, 778], [803, 836], [867, 901], [933, 966], [998, 1032], [1063, 1097], [1129, 1162], [1194, 1227]),
  v(430, [541, 774]),
  v(492, [541, 773]),
  v(553, [541, 773]),
  v(614, [541, 773]),
  v(675, [589, 773]),
  v(736, [541, 583], [615, 655], [704, 773]),
  v(797, [541, 575], [607, 641], [672, 706], [738, 773]),
  ...[859, 920, 981, 1042, 1103, 1164, 1231].map((x) => v(x, ...TREADS)),
  v(1226, [532, 542], [773, 783]),
].join("");

const SLANTED =
  "M650.5 541.5L773 773.5 M675.5 589L736.5 704.5L675.5 773 M676 541L685 557 M699 585L715 615 M730 643L746 672 M763 705L776 730 M791 758L798.5 773.5 M1164.500 541.500L1171 558 M1180 582L1192 613 M1203 643L1215 674 M1222 698L1229 714L1231 707 M1229 714L1209 733 M1186 754L1165 773";

const CENTRE = h(704, [440, 737]) + h(704, [772, 785], [817, 850], [882, 916], [947, 982], [1012, 1046], [1078, 1112], [1143, 1183], [1214, 1232]);

function Plan() {
  return (
    <Drawing viewBox="268 138 1457 824" aria-label="Stair plan">
      <g stroke={LINE} shapeRendering="crispEdges">
        {GRID_X.map((x) => <path key={x} d={`M${x}.5 138V962`} />)}
        {GRID_Y.map((y) => <path key={y} d={`M267 ${y}.5H1725`} />)}
      </g>
      <path d="M221 319.500H1700" stroke="#777" strokeDasharray="83 39 1 32.100" />
      <path d={STRAIGHT} shapeRendering="crispEdges" />
      <path d={SLANTED} strokeWidth="1.200" />
      <path d={CENTRE} stroke="#444" strokeWidth="1.500" />
      <g fill="#b3b3b3">
        <circle cx="430.500" cy="705" r="8.500" />
        <circle cx="763" cy="705" r="8.500" />
      </g>
      <g fill="#f0f0f0" fillOpacity="0.900" stroke="none">
        <rect x="1130" y="136" width="32" height="18" rx="3" />
        <rect x="1130" y="945" width="32" height="16" rx="3" />
        <rect x="269" y="534" width="16" height="32" rx="3" />
      </g>
      <path d="M1133 147.500h27 M1133 952.500h27 M277.500 537v27" stroke="#f5a55f" strokeDasharray="5 2" />
    </Drawing>
  );
}

const ArrowDown = styled.svg`
  position: absolute;
  left: 115px;
  top: 29px;
  width: 12px;
  height: 474px;
  fill: ${RED};
`;

function Palettes() {
  return (
    <Left>
      <Grip $h={9} $line={71} $span={215} />
      <SearchRow>
        <SearchBox $w={182}><Icon name="search" size={14} tint="#555" /><input placeholder="Search Favorites" aria-label="Search Favorites" /></SearchBox>
        <SmallButton $w={28} $h={21} $gap={2} aria-label="Favorites options"><Icon name="gear" size={16} /><Caret $dir="right" /></SmallButton>
      </SearchRow>
      <Scroller $h={87}>
        <List>
          <Row $level={0} $on><Chevron open /><Icon name="folderStar" />Favorites</Row>
          {["2D", "Akser", "Andre arealer"].map((t) => (
            <Row key={t} $level={1}><Chevron /><Icon name="folder" />{t}</Row>
          ))}
        </List>
        <Track $top={12}><Thumb $w={2} $h={17} /></Track>
      </Scroller>
      <Split />
      <Scroller $h={169}>
        <List>
          <NameHead><Caret $dir="up" $color="#a8a8a8" /><span>Name</span></NameHead>
          <NameRow><Icon name="folder" />Trapp</NameRow>
        </List>
        <Track $top={24}><Caret $dir="up" $color="#8a8a8a" /><Spacer /><Caret $color="#8a8a8a" /></Track>
      </Scroller>
      <Actions $h={34} $line>
        <Icon name="starPlus" dim />
        <Icon name="folderPlus" />
        <Icon name="remove" size={18} />
        <Apply disabled><span>Apply</span><Caret $color="#a0a0a0" /></Apply>
      </Actions>
      <Grip $h={9} $line={71} $span={215} />
      <MapTabs>
        <FirstTab aria-label="Project map"><Icon name="homeOpen" /></FirstTab>
        <TabDivider />
        <TabButton $on aria-label="View map"><Icon name="homeBox" /></TabButton>
        <TabButton aria-label="Layout book"><Icon name="layout" /></TabButton>
        <TabButton aria-label="Publisher"><Icon name="books" /></TabButton>
        <SmallButton $w={33} $h={21} $gap={5} aria-label="Navigator menu"><Icon name="hamburger" size={16} /><Caret $dir="right" /></SmallButton>
      </MapTabs>
      <SearchRow>
        <SearchBox $w={216}><Icon name="search" size={14} tint="#555" /><input placeholder="Search View Map" aria-label="Search View Map" /></SearchBox>
      </SearchRow>
      <Scroller>
        <List>
          {TREE.map(([t, level, icon, open]) => (
            <Row key={t} $level={level} $on={t === "1. etasje"} $bold={t === "1. etasje"}>
              <Chevron open={open} /><Icon name={icon} />{t}
            </Row>
          ))}
        </List>
        <Track $top={7}><Caret $dir="up" $color="#8a8a8a" /><Thumb $w={6} $h={196} /><Spacer /><Caret $color="#8a8a8a" /></Track>
      </Scroller>
      <Grip $h={15} $line={170} $span={196} $thick={2} />
      <Actions $h={35}>
        <Icon name="viewPlus" />
        <Icon name="linkViewPlus" />
        <Icon name="folderPlus" />
        <Icon name="listBox" />
        <Icon name="remove" size={18} />
      </Actions>
      <PropsHead><Caret $color="#333" />Properties</PropsHead>
      <PropRow $h={22}>
        <Icon name="plan" size={16} />
        <Field $w={38} aria-label="View ID" />
        <Field $w={154} aria-label="View name" defaultValue="1. etasje" />
      </PropRow>
      <PropRow $h={21}><Icon name="layers" size={15} /><span>02 Byggesøknad (plan)</span></PropRow>
      <PropRow $h={21}><Icon name="scale" size={15} /><span>1:100</span></PropRow>
      <PropRow $h={21}>
        <Icon name="frame" size={15} /><span>02 Byggesøknad</span>
        <svg width="13" height="13" viewBox="0 0 13 13" aria-hidden="true">
          <path d="M6.500 1L12.500 12H.5z" fill="#f7d915" stroke="#555" strokeLinejoin="round" />
          <path d="M6.500 4v4 M6.500 9.500v1.500" stroke="#222" strokeWidth="1.600" />
        </svg>
      </PropRow>
      <Settings $w={216} $h={22}>Settings...</Settings>
    </Left>
  );
}

export default function App() {
  return (
    <Shell>
      <Global />
      <MenuBar>{MENUS.map((m) => <button key={m}>{m}</button>)}</MenuBar>
      <TopBar><Tools list={TOP_TOOLS} /></TopBar>
      <Body>
        <Palettes />
        <Work>
          <InfoBox>
            <h2>Main:</h2>
            <InfoTools>
              <SmallButton $w={40} $h={20} aria-label="Selection method"><Icon name="selFrame" size={18} /><Caret $dir="right" /></SmallButton>
              <SmallButton $w={40} $h={20} aria-label="Quick selection"><Icon name="marqueeArrow" size={20} /><Caret $dir="right" /></SmallButton>
              <SmallButton $w={40} $h={20} $on aria-label="Magnet"><Icon name="magnet" size={18} /></SmallButton>
              <SmallButton $w={48} $h={29} $gap={10} aria-label="Arrow geometry"><Icon name="arrow" size={16} /><Caret $dir="right" /></SmallButton>
            </InfoTools>
          </InfoBox>
          <WorkRow>
            <Toolbox>
              <Grip $h={9} $line={17} />
              <BigTool $on aria-label="Arrow tool"><Icon name="arrow" size={18} /></BigTool>
              <BigTool aria-label="Marquee tool"><Icon name="marquee" size={20} /></BigTool>
            </Toolbox>
            <Pane>
              <TabStrip>
                <Overview aria-label="Tab overview"><Icon name="overview" size={20} /></Overview>
                {TABS.map(([icon, label], i) => (
                  <Tab key={label} $on={i === 0}>
                    <Icon name={icon} size={icon === "plan" ? 20 : 18} />
                    {label}
                    {i === 0 && <CloseMark viewBox="0 0 7 7"><path d="M.5.5l6 6M6.500.5l-6 6" /></CloseMark>}
                  </Tab>
                ))}
              </TabStrip>
              <Canvas>
                <Plan />
                <Popup aria-label="Stair edit mode">
                  <PopRow><Radio type="radio" name="mode" /><span>Schematic</span></PopRow>
                  <PopRow><Radio type="radio" name="mode" defaultChecked /><span>Symbol</span></PopRow>
                  <PopRow as="div" />
                  <PopRow as="div"><Icon name="eye" size={13} tint={MENU_BLUE} /><button>Environment</button></PopRow>
                  <PopRule />
                  <PopRow as="div"><Icon name="stair" size={13} tint={MENU_BLUE} /><button>Stair Settings</button></PopRow>
                  <PopRow as="div"><Icon name="exit" size={13} tint={MENU_BLUE} /><button>Exit Edit Mode</button></PopRow>
                </Popup>
                <Callout $x={-1} $y={16} $w={108} $h={30} />
                <Callout $x={91} $y={545} $w={1013} $h={56} />
                <ArrowDown viewBox="0 0 12 474" aria-hidden="true"><path d="M4 2a2 2 0 0 1 4 0V462h4L6 474 0 462h4z" /></ArrowDown>
              </Canvas>
              <StatusBar>
                <ZoomGroup>
                  <ZoomButton aria-label="Previous zoom"><Icon name="zoomBack" size={16} /></ZoomButton>
                  <ZoomButton aria-label="Next zoom"><Icon name="zoomFwd" size={16} dim /></ZoomButton>
                  <ZoomButton aria-label="Zoom in"><Icon name="zoomIn" size={16} /></ZoomButton>
                </ZoomGroup>
                {SEGMENTS.map(([icon, label], i) => (
                  <Segment key={i}><Icon name={icon} size={16} /><span>{label}</span><Caret $dir="right" /></Segment>
                ))}
              </StatusBar>
            </Pane>
          </WorkRow>
        </Work>
      </Body>
      <BottomBar>
        <Short />
        <TwoButton aria-label="Toggle layer visibility"><Icon name="eyeToggle" /></TwoButton>
        <TwoButton aria-label="Toggle layer lock"><Icon name="locks" /></TwoButton>
        <Divider />
        <LayerGroup $w={87}>
          Selection's Layer:
          <div><Icon name="eyeOff" size={16} dim /><Icon name="lock" size={13} dim /><Icon name="unlock" size={13} dim /></div>
        </LayerGroup>
        <Divider />
        <LayerGroup $w={86}>
          All Layers:
          <div><Icon name="eyeOff" size={16} /><Icon name="lock" size={13} /></div>
        </LayerGroup>
        <Divider />
        <UndoStack><Icon name="redo" size={13} dim /><Icon name="undo" size={13} dim /></UndoStack>
        <Short />
        <Tools list="~info> |" />
        <Tools list={BOTTOM_TOOLS} />
      </BottomBar>
    </Shell>
  );
}
